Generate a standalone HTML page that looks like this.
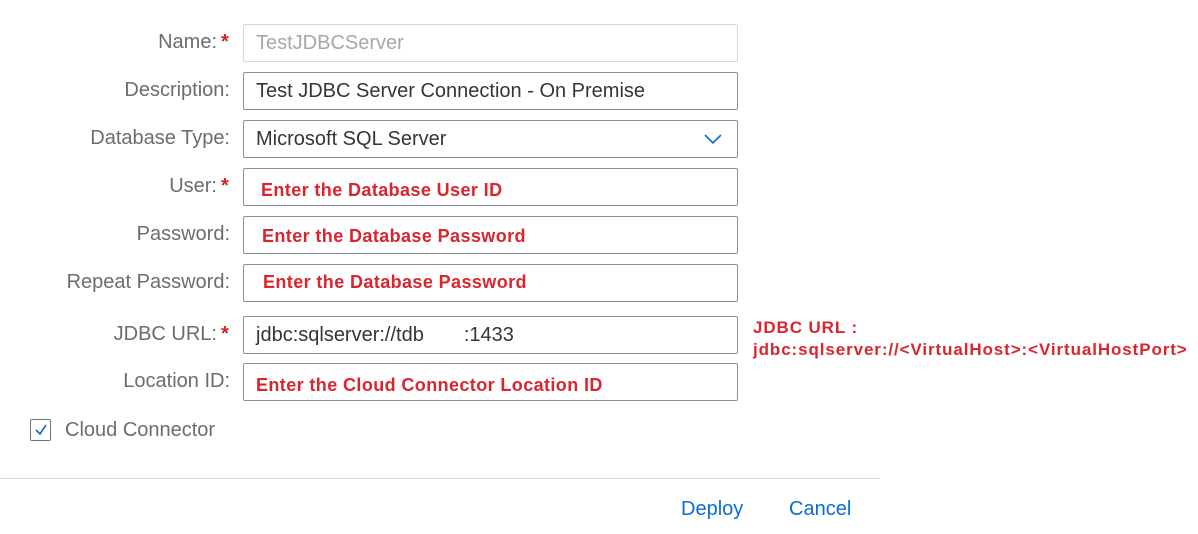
<!DOCTYPE html>
<html><head><style>
body{margin:0;width:1198px;height:534px;background:#fff;font-family:"Liberation Sans",sans-serif;position:relative;overflow:hidden}
.l{position:absolute;right:968px;font-size:20px;color:#6a6d70;white-space:nowrap}
.l.r{right:981px}
.ast{position:absolute;left:221px;color:#d0271d;font-size:20px;font-weight:bold}
.i{position:absolute;left:243px;width:493px;height:36px;border:1px solid #89919a;border-radius:2px;box-sizing:content-box;font-size:20px;color:#32363a;line-height:36px;padding-left:0}
.i span{position:absolute;left:12px}
.red{color:#d9262e;font-weight:bold;font-size:18px;letter-spacing:0.4px}
</style></head><body>
<div class="l r" style="top:31px">Name:</div><div class="ast" style="top:31px">*</div>
<div class="i" style="top:24px;border-color:#d5d9dc"><span style="color:#a4a8ac">TestJDBCServer</span></div>
<div class="l" style="top:79px">Description:</div>
<div class="i" style="top:72px"><span>Test JDBC Server Connection - On Premise</span></div>
<div class="l" style="top:127px">Database Type:</div>
<div class="i" style="top:120px"><span>Microsoft SQL Server</span>
<svg style="position:absolute;left:460px;top:12px" width="18" height="12"><path d="M1 2 L9 10 L17 2" fill="none" stroke="#0a6ed1" stroke-width="1.6"/></svg></div>
<div class="l r" style="top:175px">User:</div><div class="ast" style="top:175px">*</div>
<div class="i" style="top:168px"><span class="red" style="left:17px;top:3px">Enter the Database User ID</span></div>
<div class="l" style="top:223px">Password:</div>
<div class="i" style="top:216px"><span class="red" style="left:18px;top:1px">Enter the Database Password</span></div>
<div class="l" style="top:271px">Repeat Password:</div>
<div class="i" style="top:264px"><span class="red" style="left:19px;top:-1px">Enter the Database Password</span></div>
<div class="l r" style="top:323px">JDBC URL:</div><div class="ast" style="top:323px">*</div>
<div class="i" style="top:316px"><span>jdbc:sqlserver://tdb<span style="position:static;display:inline-block;width:40px"></span>:1433</span></div>
<div class="l" style="top:370px">Location ID:</div>
<div class="i" style="top:363px"><span class="red" style="top:3px">Enter the Cloud Connector Location ID</span></div>
<div class="red" style="position:absolute;left:753px;top:317px;line-height:22px;font-size:17px;letter-spacing:0.9px">JDBC URL :<br>jdbc:sqlserver://&lt;VirtualHost&gt;:&lt;VirtualHostPort&gt;</div>
<div style="position:absolute;left:30px;top:419px;width:19px;height:20px;border:1px solid #5b738b;border-radius:2px"></div>
<svg style="position:absolute;left:34px;top:423px" width="14" height="14"><path d="M2 7 L6 11 L12 2" fill="none" stroke="#0a6ed1" stroke-width="1.6"/></svg>
<div style="position:absolute;left:65px;top:419px;font-size:20px;color:#6a6d70">Cloud Connector</div>
<div style="position:absolute;left:0;top:478px;width:880px;height:1px;background:#d9d9d9"></div>
<div style="position:absolute;left:681px;top:498px;font-size:20px;color:#0a6ed1">Deploy</div>
<div style="position:absolute;left:789px;top:498px;font-size:20px;color:#0a6ed1">Cancel</div>
</body></html>
